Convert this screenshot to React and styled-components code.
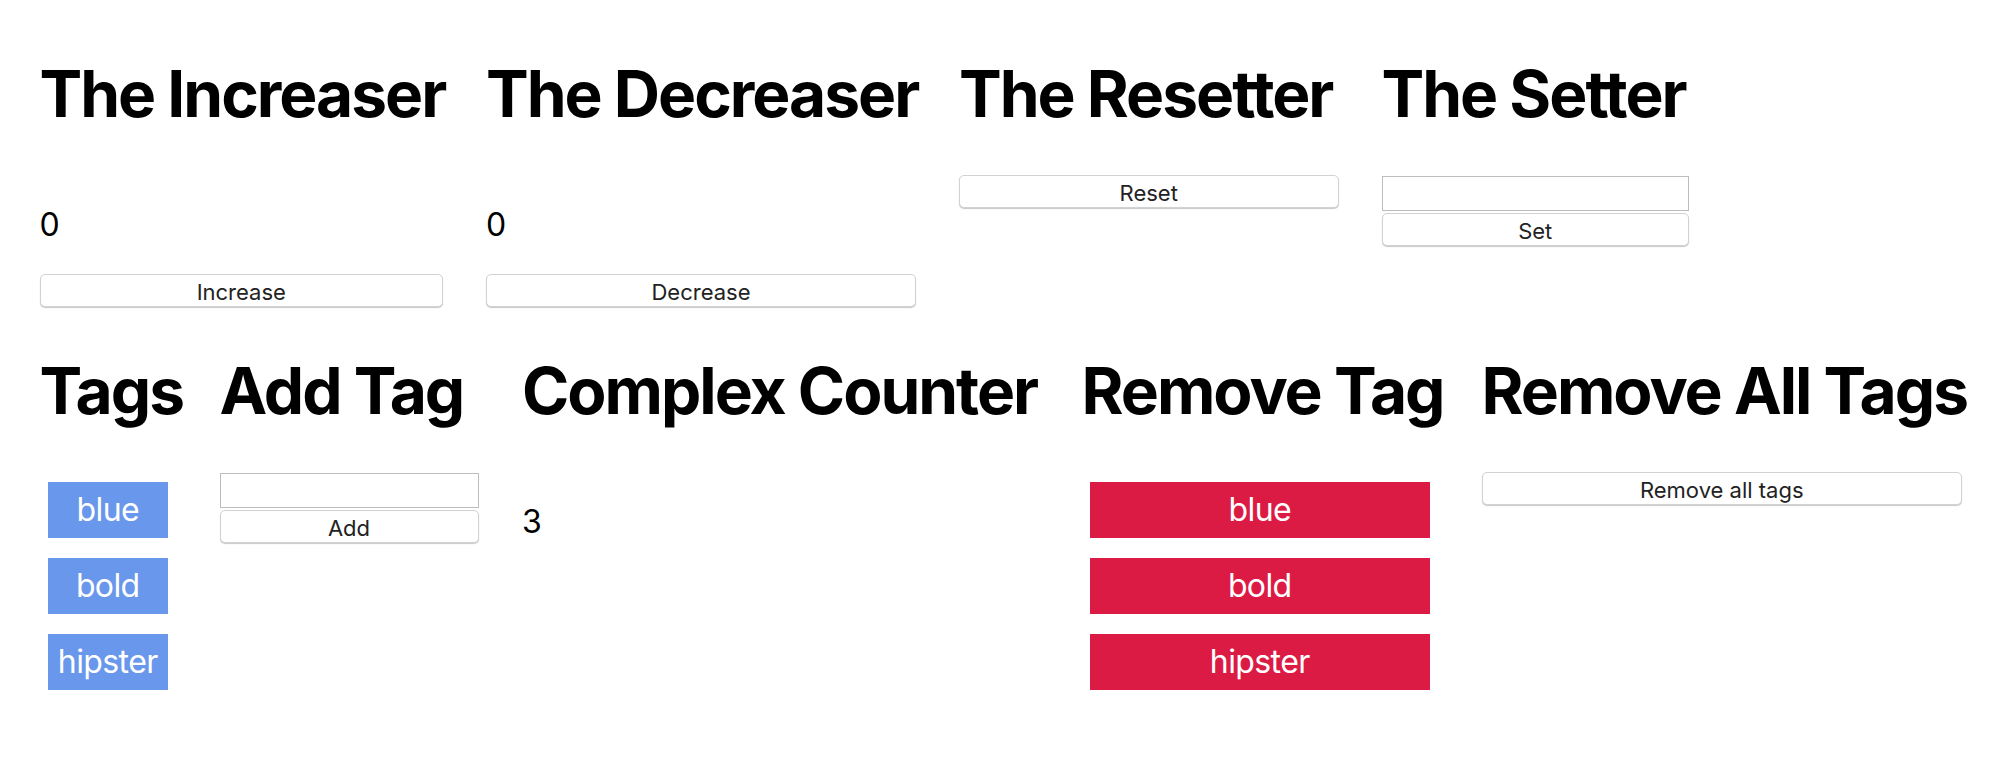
import React, { useState } from "react";
import styled, { createGlobalStyle } from "styled-components";

const Global = createGlobalStyle`
  html, body { margin: 0; padding: 0; background: #fff; }
  body { font-family: Inter, "Noto Sans", "Liberation Sans", sans-serif; color: #000; }
  * { box-sizing: border-box; }
`;

const Page = styled.div`
  display: flex;
  flex-direction: column;
  gap: 3px;
  padding: 13px 0 0 39.5px;
`;

const Row = styled.div`
  display: flex;
  align-items: flex-start;
  column-gap: ${(p) => p.$gap}px;
`;

const Section = styled.section`
  display: flex;
  flex-direction: column;
  width: ${(p) => p.$w}px;
  flex: none;
`;

const Title = styled.h1`
  margin: 43px 0;
  font-size: 64px;
  line-height: 76px;
  font-weight: 700;
  white-space: nowrap;
  letter-spacing: -2px;
`;

const Count = styled.p`
  margin: 32px 0;
  font-size: 32px;
  line-height: 35px;
`;

const Button = styled.button`
  height: 33px;
  width: 100%;
  margin: 0;
  padding: 3px 12px 0;
  background: #fff;
  border: 1px solid #d2d2d2;
  border-radius: 5px;
  box-shadow: 0 1px 1px rgba(0, 0, 0, 0.22);
  font-family: Inter, "Noto Sans", sans-serif;
  font-size: 22px;
  line-height: 28px;
  color: #222;
  cursor: pointer;
`;

const Field = styled.input`
  height: 35px;
  width: 100%;
  margin: 1px 0 2px;
  padding: 0 6px;
  border: 1px solid #bdbdbd;
  border-radius: 0;
  background: #fff;
  font-family: Inter, "Noto Sans", sans-serif;
  font-size: 22px;
  outline: none;
`;

const TagList = styled.div`
  display: flex;
  flex-direction: column;
`;

const Tag = styled.div`
  margin: 10px 8px;
  height: 56px;
  line-height: 56px;
  text-align: center;
  font-size: 32px;
  letter-spacing: -0.6px;
  color: #fff;
  background: ${(p) => (p.$remove ? "#dc1b44" : "#6897eb")};
  cursor: ${(p) => (p.$remove ? "pointer" : "default")};
`;

export default function App() {
  const [count, setCount] = useState(0);
  const [setVal, setSetVal] = useState("");
  const [tags, setTags] = useState(["blue", "bold", "hipster"]);
  const [newTag, setNewTag] = useState("");

  return (
    <>
      <Global />
      <Page>
        <Row $gap={43}>
          <Section $w={403.5}>
            <Title>The Increaser</Title>
            <Count>{count}</Count>
            <Button onClick={() => setCount((c) => c + 1)}>Increase</Button>
          </Section>
          <Section $w={430}>
            <Title>The Decreaser</Title>
            <Count>{count}</Count>
            <Button onClick={() => setCount((c) => c - 1)}>Decrease</Button>
          </Section>
          <Section $w={379.5}>
            <Title>The Resetter</Title>
            <Button onClick={() => setCount(0)}>Reset</Button>
          </Section>
          <Section $w={307.5}>
            <Title>The Setter</Title>
            <Field value={setVal} onChange={(e) => setSetVal(e.target.value)} />
            <Button onClick={() => setCount(Number(setVal) || 0)}>Set</Button>
          </Section>
        </Row>
        <Row $gap={43.5}>
          <Section $w={136.5}>
            <Title>Tags</Title>
            <TagList>
              {tags.map((t) => (
                <Tag key={t}>{t}</Tag>
              ))}
            </TagList>
          </Section>
          <Section $w={259}>
            <Title>Add Tag</Title>
            <Field value={newTag} onChange={(e) => setNewTag(e.target.value)} />
            <Button
              onClick={() => {
                if (newTag) setTags((ts) => [...ts, newTag]);
                setNewTag("");
              }}
            >
              Add
            </Button>
          </Section>
          <Section $w={516}>
            <Title>Complex Counter</Title>
            <Count>{tags.length}</Count>
          </Section>
          <Section $w={356.5}>
            <Title>Remove Tag</Title>
            <TagList>
              {tags.map((t) => (
                <Tag key={t} $remove onClick={() => setTags((ts) => ts.filter((x) => x !== t))}>
                  {t}
                </Tag>
              ))}
            </TagList>
          </Section>
          <Section $w={480.5}>
            <Title>Remove All Tags</Title>
            <Button onClick={() => setTags([])}>Remove all tags</Button>
          </Section>
        </Row>
      </Page>
    </>
  );
}
